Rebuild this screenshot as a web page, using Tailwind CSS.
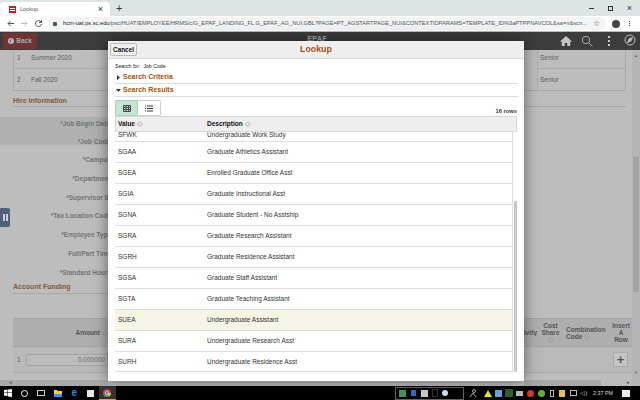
<!DOCTYPE html>
<html lang="en">
<head>
  <meta charset="UTF-8" />
  <title>Lookup</title>
  <script src="https://cdn.jsdelivr.net/npm/@tailwindcss/browser@4"></script>
</head>
<body class="w-[640px] h-[400px] overflow-hidden relative flex flex-col bg-[#bdbdbd] font-['Liberation_Sans',Arial,sans-serif]">

  <!-- browser tabs -->
  <div class="h-[16px] shrink-0 flex items-end bg-[#dee3e3]">
    <div class="w-[110px] h-[14px] bg-white rounded-t flex items-center px-[9px]">
      <div class="w-[7px] h-[7px] bg-[#d8141c] flex flex-col justify-center gap-[1px] px-[1px]">
        <div class="h-px bg-white"></div>
        <div class="h-px bg-white"></div>
      </div>
      <span class="ml-[4px] text-[5.500px] text-[#555]">Lookup</span>
      <span class="ml-auto mr-[-2px] text-[9px] leading-none text-[#333]">×</span>
    </div>
    <span class="ml-[6px] mb-[2px] text-[11px] leading-none text-[#333]">+</span>
    <div class="ml-auto mr-[8px] mb-[5px] flex items-center gap-[14px] text-[#333]">
      <div class="w-[5px] h-px bg-[#333]"></div>
      <div class="w-[5px] h-[5px] border border-[#333]"></div>
      <span class="text-[9px] leading-[5px]">×</span>
    </div>
  </div>

  <!-- address bar -->
  <div class="h-[16px] shrink-0 flex items-center bg-white border-b border-[#bbb]">
    <svg class="ml-[7px] shrink-0" width="7" height="7" viewBox="0 0 7 7" fill="none" stroke="#555" stroke-width="1"><path d="M7 3.500H1M3.500 1 1 3.500 3.500 6"/></svg>
    <svg class="ml-[7px] shrink-0" width="7" height="7" viewBox="0 0 7 7" fill="none" stroke="#bbb" stroke-width="1"><path d="M0 3.500h6M3.500 1 6 3.500 3.500 6"/></svg>
    <svg class="ml-[7px] shrink-0" width="7" height="7" viewBox="0 0 7 7" fill="none" stroke="#555" stroke-width="1"><path d="M6 2A3 3 0 1 0 6.500 4M6.500 0v2.500H4"/></svg>
    <div class="ml-[6px] w-[558px] shrink-0 h-[13px] rounded-full bg-[#f1f3f4] flex items-center pl-[5px]">
      <div class="w-[4px] h-[4px] bg-[#555] rounded-[1px] shrink-0"></div>
      <span class="ml-[6px] w-[527px] overflow-hidden text-[5.700px] text-[#555] whitespace-nowrap"><span class="text-[#222]">hcm-uat.ps.sc.edu</span>/psc/HUAT/EMPLOYEE/HRMS/c/G_EPAF_LANDING_FL.G_EPAF_AG_NUI.GBL?PAGE=PT_AGSTARTPAGE_NUI&amp;CONTEXTIDPARAMS=TEMPLATE_ID%3aPTPPNAVCOL&amp;sa=n&amp;scn...</span>
      <span class="ml-[3px] text-[8px] leading-none text-[#444] shrink-0">☆</span>
    </div>
    <div class="ml-[6px] w-[8px] h-[8px] rounded-full bg-[#444] shrink-0"></div>
    <div class="ml-[9px] flex flex-col gap-px shrink-0">
      <div class="w-px h-px bg-[#444]"></div>
      <div class="w-px h-px bg-[#444]"></div>
      <div class="w-px h-px bg-[#444]"></div>
    </div>
  </div>

  <!-- app nav bar -->
  <div class="h-[18px] shrink-0 flex items-center bg-[#3c3c3c] relative">
    <div class="ml-[3px] w-[34px] h-[16px] mb-[1px] bg-[#6f3535] flex items-center justify-center gap-[2px] text-[6.500px] font-bold text-[#a8a8a8]">
      <svg width="6" height="6" viewBox="0 0 6 6"><circle cx="3" cy="3" r="3" fill="#bbb"/><path d="M3.500 1.200 1.700 3l1.800 1.800" fill="none" stroke="#555"/></svg>Back
    </div>
    <div class="absolute left-[304px] top-0 w-[26px] h-[9px] overflow-hidden flex justify-center text-[7.500px] font-bold leading-[8px] pt-[3px] text-[#aaa]">EPAF</div>
    <svg class="ml-auto" width="12" height="12" viewBox="0 0 12 12" fill="#c4c4c4"><path d="M6 1 0 6.500h1.700V11h3V8h2.600v3h3V6.500H12z"/></svg>
    <svg class="ml-[9px]" width="12" height="12" viewBox="0 0 12 12" fill="none" stroke="#aaa" stroke-width="1"><circle cx="5" cy="5" r="3.700"/><path d="M7.800 7.800 11.500 11.500"/></svg>
    <div class="ml-[15px] flex flex-col gap-[2px]">
      <div class="w-[2px] h-[2px] bg-[#ccc]"></div>
      <div class="w-[2px] h-[2px] bg-[#ccc]"></div>
      <div class="w-[2px] h-[2px] bg-[#ccc]"></div>
    </div>
    <svg class="ml-[14px] mr-[4px] mb-[3px]" width="12" height="12" viewBox="0 0 12 12" fill="none" stroke="#bbb" stroke-width="1"><circle cx="6" cy="6" r="5"/><path d="M8.500 3.500 7 7 3.500 8.500 5 5z" fill="#bbb"/></svg>
  </div>

  <!-- page behind the dialog -->
  <div class="h-[336px] shrink-0 flex bg-[#bdbdbd] text-[6.500px] text-[#5e5e5e]">

    <!-- left part -->
    <div class="w-[108px] shrink-0 overflow-hidden flex flex-col">
      <div class="ml-[13px] w-[95px] border-l border-b border-[#a8a8a8]">
        <div class="h-[19px] pb-[3px] flex items-center border-b border-[#adadad]"><span class="w-[17px] pl-[3px]">1</span>Summer 2020</div>
        <div class="h-[21px] flex items-center"><span class="w-[17px] pl-[3px]">2</span>Fall 2020</div>
      </div>
      <div class="ml-[13px] mt-[5px] border-b border-[#a8a8a8] text-[7px] leading-[10px] font-bold text-[#7d5a3c]">Hire Information</div>
      <div class="mt-[10px] h-[28px] bg-[#b0b0b0] flex flex-col items-end font-bold leading-[10px] text-[#757575]">
        <span class="mr-[-2px] mt-[2px] whitespace-nowrap">*Job Begin Date</span>
        <span class="mr-[-2px] mt-[8px] whitespace-nowrap">*Job Code</span>
      </div>
      <div class="h-[104px] mt-[10px] mr-[-3px] flex flex-col justify-between items-end font-bold leading-[10px] text-[#757575]">
        <span>*Campus</span>
        <span>*Department</span>
        <span>*Supervisor ID</span>
        <span>*Tax Location Code</span>
        <span>*Employee Type</span>
        <span>Full/Part Time</span>
      </div>
      <div class="mt-[9px] mr-[-3px] text-right font-bold leading-[10px] text-[#757575] whitespace-nowrap">*Standard Hours</div>
      <div class="ml-[13px] mt-[4px] pb-[1px] border-b border-[#a8a8a8] text-[7px] leading-[10px] font-bold text-[#7d5a3c]">Account Funding</div>
      <div class="mt-[24px] ml-[13px] h-[29px] bg-[#aeaeae] border-y border-[#a4a4a4] flex items-center justify-end pr-[1px] font-bold text-[#555]">Amount<span class="ml-[2px] font-normal text-[#888]">◇</span></div>
      <div class="ml-[13px] h-[26px] bg-[#b9b9b9] border-b border-[#a8a8a8] flex items-center pl-[4px]">
        <span class="w-[8px]">1</span>
        <div class="ml-[1px] grow h-[12px] bg-[#bdbdbd] border border-[#a4a4a4] flex items-center justify-end pr-[2px] text-[#6b6b6b]">0.000000</div>
      </div>
      <div class="mt-auto h-[6px] bg-[#aaa] flex items-center pl-[9px] text-[5px] text-[#555]">◂</div>
    </div>

    <div class="w-[416px] shrink-0"></div>

    <!-- right part -->
    <div class="w-[108px] shrink-0 overflow-hidden flex flex-col">
      <div class="w-[102px] h-[41px] pl-[13px] border-b border-r border-[#a8a8a8]">
        <div class="h-full border-l border-[#adadad] flex flex-col">
          <div class="h-[19px] pb-[3px] flex items-center pl-[2px] border-b border-[#adadad]">Senior</div>
          <div class="h-[21px] flex items-center pl-[2px]">Senior</div>
        </div>
      </div>
      <div class="w-[102px] mt-[15px] border-b border-[#a8a8a8]"></div>
      <div class="mt-[211px] h-[29px] bg-[#aeaeae] border-y border-[#a4a4a4] flex items-center text-[6.500px] leading-[7px] font-bold text-[#555]">
        <div class="w-[13px] overflow-hidden flex justify-end"><span>ivity</span></div>
        <div class="ml-[4px] w-[19px] text-center">Cost Share<br /><span class="font-normal text-[#888]">◇</span></div>
        <div class="ml-[6px] w-[42px] text-left">Combination Code <span class="font-normal text-[#888]">◇</span></div>
        <div class="ml-[3px] w-[20px] text-center">Insert<br />A<br />Row</div>
      </div>
      <div class="h-[26px] bg-[#b9b9b9] border-b border-[#a8a8a8] flex items-center justify-end pr-[4px]">
        <div class="w-[15px] h-[15px] bg-[#c4c4c4] border border-[#aaa] flex items-center justify-center text-[13px] font-bold leading-none text-[#555]">+</div>
      </div>
      <div class="mt-auto h-[6px] flex text-[5px] text-[#555]">
        <div class="w-[77px] bg-[#a8a8a8]"></div>
        <div class="grow bg-[#bbb] flex items-center justify-end pr-[2px]">▸</div>
      </div>
    </div>

    <!-- page scrollbar -->
    <div class="w-[8px] shrink-0 bg-[#b5b5b5] flex flex-col items-center">
      <span class="text-[4px] leading-[8px] mt-[2px] text-[#666]">▲</span>
      <div class="mt-[97px] w-[6px] h-[135px] bg-[#a3a3a3]"></div>
      <span class="mt-auto mb-[9px] text-[4px] leading-[8px] text-[#666]">▼</span>
    </div>
  </div>

  <!-- windows taskbar -->
  <div class="h-[14px] shrink-0 bg-black flex items-center relative">
    <div class="w-[16.500px] flex justify-center">
      <svg width="8" height="8" viewBox="0 0 8 8" fill="#fff"><path d="M0 1 3.500.5v3H0zM4 .4 8 0v3.500H4zM0 4h3.500v3L0 6.500zM4 4h4v4l-4-.5z"/></svg>
    </div>
    <div class="w-[16.500px] flex justify-center"><div class="w-[7px] h-[7px] rounded-full border border-white"></div></div>
    <div class="w-[16.500px] flex justify-center"><div class="w-[8px] h-[6px] border border-[#ccc]"></div></div>
    <div class="w-[16.500px] flex justify-center">
      <svg width="8" height="7" viewBox="0 0 8 7"><path d="M0 0h3l1 1h4v6H0z" fill="#f4c94f"/><path d="M0 4h8v3H0z" fill="#3a9ad9"/></svg>
    </div>
    <div class="w-[16.500px] flex justify-center text-[10px] leading-none font-bold text-[#1e90e0]">e</div>
    <div class="w-[16.500px] flex justify-center"><div class="w-[7px] h-[7px] bg-[#e8e8e8]"></div></div>
    <div class="w-[16.500px] h-[14px] bg-[#333] border-b border-[#e88] flex items-center justify-center">
      <svg width="8" height="8" viewBox="0 0 8 8"><circle cx="4" cy="4" r="4" fill="#d9432f"/><path d="M4 4 .5 6A4 4 0 0 0 6 7.500z" fill="#34a853"/><path d="M4 4 8 4A4 4 0 0 1 6 7.500z" fill="#fbbc05"/><circle cx="4" cy="4" r="1.700" fill="#4285f4" stroke="#fff" stroke-width=".6"/></svg>
    </div>

    <div class="ml-auto mr-[10px] flex items-center">
      <div class="w-[69px] h-[13px] border border-[#666] flex items-center pl-[1px]">
        <div class="w-[10.670px] flex justify-center"><div class="w-[7px] h-[7px] bg-[#3c9a5a]"></div></div>
        <div class="w-[10.670px] flex justify-center"><div class="w-[5px] h-[6px] bg-[#2a6fd0]"></div></div>
        <div class="w-[10.670px] flex justify-center"><div class="w-[7px] h-[7px] bg-[#ccc]"></div></div>
        <div class="w-[10.670px] flex justify-center"><div class="w-[6px] h-[8px] border border-[#333]"></div></div>
        <div class="w-[10.670px] flex justify-center"><div class="w-[6px] h-[6px] rounded-full bg-[#cfe6ff]"></div></div>
      </div>
      <div class="ml-[4px] w-[10px] flex justify-center">
        <svg width="8" height="8" viewBox="0 0 8 8" fill="none" stroke="#aaa"><circle cx="5" cy="2" r="1.500"/><path d="M1 8 4 4l3 4"/></svg>
      </div>
      <div class="ml-[4px] w-[10.670px] flex justify-center"><svg width="8" height="7" viewBox="0 0 8 7"><path d="M4 0 8 7H0z" fill="#f5e11d"/></svg></div>
      <div class="w-[10.670px] flex justify-center"><div class="w-[7px] h-[7px] bg-[#68a8e0]"></div></div>
      <div class="w-[10.670px] flex justify-center"><div class="w-[8px] h-[8px] bg-[#355f2a]"></div></div>
      <div class="w-[10.670px] flex justify-center"><div class="w-[7px] h-[5px] bg-[#bbb]"></div></div>
      <div class="w-[10.670px] flex justify-center"><div class="w-[7px] h-[7px] rounded-full bg-[#d33]"></div></div>
      <div class="w-[10.670px] flex justify-center"><div class="w-[7px] h-[7px] rounded-full bg-[#5cb531]"></div></div>
      <div class="w-[10.670px] flex justify-center"><div class="w-[4px] h-[7px] border border-[#bbb]"></div></div>
      <div class="w-[10.670px] flex justify-center"><div class="w-[6px] h-[7px] bg-[#e6c44c]"></div></div>
      <div class="w-[10.670px] flex justify-center"><div class="w-[7px] h-[6px] border border-[#bbb]"></div></div>
      <div class="w-[10.670px] flex justify-center text-[6px] leading-none text-[#ccc]">◁)</div>
      <span class="ml-[4px] w-[19px] text-[5.400px] text-[#ddd] whitespace-nowrap">2:37 PM</span>
      <div class="ml-[10px] w-[8px] h-[7px] bg-[#eee]"></div>
    </div>
  </div>

  <!-- side tab on the left edge -->
  <div class="absolute left-0 top-[208px] w-[10px] h-[19px] bg-[#4d6478] rounded-r-[2px] flex items-center justify-center gap-px">
    <div class="w-[2px] h-[7px] bg-[#ccd]"></div>
    <div class="w-[2px] h-[7px] bg-[#ccd]"></div>
  </div>

  <!-- lookup dialog -->
  <div class="absolute left-[108px] top-[41px] w-[416px] h-[340px] bg-white flex flex-col shadow-[0_0_14px_rgba(0,0,0,0.5)] text-[#222]">
    <div class="h-[18px] shrink-0 bg-[#eeeeee] border-b border-[#d8d8d8] relative flex items-center justify-center">
      <div class="absolute left-[2px] top-[2px] w-[27px] h-[13px] bg-[#eee] border border-[#bbb] rounded-[2px] flex items-center justify-center text-[6.400px] font-bold text-[#111]">Cancel</div>
      <span class="text-[8.800px] font-bold text-[#a5530a]">Lookup</span>
    </div>
    <div class="h-[13px] pl-[7px] pt-[2px] flex items-center text-[5.200px] text-[#222]">Search for:<span class="ml-[3px]">Job Code</span></div>
    <div class="ml-[7px] mr-[6px] h-[12px] border-b border-[#ddd] flex items-center text-[7px] font-bold text-[#a5530a]">
      <svg class="ml-[2px] mr-[3px]" width="3" height="5" viewBox="0 0 3 5" fill="#333"><path d="M0 0 3 2.500 0 5z"/></svg>Search Criteria
    </div>
    <div class="ml-[7px] mr-[6px] h-[13px] border-b border-[#ddd] flex items-center text-[7px] font-bold text-[#a5530a]">
      <svg class="ml-[1px] mr-[2px]" width="5" height="3" viewBox="0 0 5 3" fill="#333"><path d="M0 0h5L2.500 3z"/></svg>Search Results
    </div>
    <div class="ml-[7px] mr-[7px] h-[20px] flex items-start justify-between pt-[3px]">
      <div class="flex h-[16px]">
        <div class="w-[23px] bg-[#c2e6d2] border border-[#a8d0b8] rounded-l-[2px] flex items-center justify-center">
          <svg width="8" height="7" viewBox="0 0 8 7" fill="none" stroke="#444" stroke-width="1"><path d="M.5.500h7v6h-7zM.5 2.500h7M.5 4.500h7M3 .5v6M5.500 .5v6"/></svg>
        </div>
        <div class="w-[23px] bg-white border border-l-0 border-[#ccc] rounded-r-[2px] flex items-center justify-center">
          <svg width="8" height="7" viewBox="0 0 8 7" fill="none" stroke="#333" stroke-width="1"><path d="M0 1h1M2 1h6M0 3.500h1M2 3.500h6M0 6h1M2 6h6"/></svg>
        </div>
      </div>
      <span class="mt-[7px] text-[5.800px] font-bold leading-[8px] text-[#333]">16 rows</span>
    </div>

    <!-- results table -->
    <div class="ml-[7px] w-[402px] h-[16px] mt-[-1px] shrink-0 bg-[#eeeeee] border border-[#d8d8d8] flex items-center text-[6.500px] font-bold text-[#111] z-10">
      <span class="w-[91px] pl-[2px]">Value <span class="font-normal text-[#777]">◇</span></span>
      <span>Description <span class="font-normal text-[#777]">◇</span></span>
    </div>
    <div class="ml-[7px] w-[402px] h-[241px] mt-[-1px] relative overflow-hidden flex flex-col border-b border-[#ddd] text-[6.500px] text-[#333]">
      <div class="h-[11px] shrink-0 flex items-end leading-[8px] border-b border-[#ddd] border-r mr-[4px] overflow-hidden">
        <span class="w-[92px] pl-[3px] mb-[2px]">SFWK</span><span class="mb-[2px]">Undergraduate Work Study</span>
      </div>
      <div class="h-[21px] shrink-0 mr-[4px] border-r border-b border-[#ddd] flex items-center"><span class="w-[92px] pl-[3px]">SGAA</span>Graduate Athletics Assistant</div>
      <div class="h-[21px] shrink-0 mr-[4px] border-r border-b border-[#ddd] flex items-center"><span class="w-[92px] pl-[3px]">SGEA</span>Enrolled Graduate Office Asst</div>
      <div class="h-[21px] shrink-0 mr-[4px] border-r border-b border-[#ddd] flex items-center"><span class="w-[92px] pl-[3px]">SGIA</span>Graduate Instructional Asst</div>
      <div class="h-[21px] shrink-0 mr-[4px] border-r border-b border-[#ddd] flex items-center"><span class="w-[92px] pl-[3px]">SGNA</span>Graduate Student - No Asstship</div>
      <div class="h-[21px] shrink-0 mr-[4px] border-r border-b border-[#ddd] flex items-center"><span class="w-[92px] pl-[3px]">SGRA</span>Graduate Research Assistant</div>
      <div class="h-[21px] shrink-0 mr-[4px] border-r border-b border-[#ddd] flex items-center"><span class="w-[92px] pl-[3px]">SGRH</span>Graduate Residence Assistant</div>
      <div class="h-[21px] shrink-0 mr-[4px] border-r border-b border-[#ddd] flex items-center"><span class="w-[92px] pl-[3px]">SGSA</span>Graduate Staff Assistant</div>
      <div class="h-[21px] shrink-0 mr-[4px] border-r border-b border-[#ddd] flex items-center"><span class="w-[92px] pl-[3px]">SGTA</span>Graduate Teaching Assistant</div>
      <div class="h-[21px] shrink-0 mr-[4px] border-r border-b border-[#ddd] bg-[#f5f5e6] flex items-center"><span class="w-[92px] pl-[3px]">SUEA</span>Undergraduate Assistant</div>
      <div class="h-[21px] shrink-0 mr-[4px] border-r border-b border-[#ddd] flex items-center"><span class="w-[92px] pl-[3px]">SURA</span>Undergraduate Research Asst</div>
      <div class="h-[21px] shrink-0 mr-[4px] border-r border-b border-[#ddd] flex items-center"><span class="w-[92px] pl-[3px]">SURH</span>Undergraduate Residence Asst</div>
      <div class="absolute right-0 top-[70px] bottom-0 w-[3px] bg-[#c6c6c6]"></div>
    </div>
  </div>
</body>
</html>
